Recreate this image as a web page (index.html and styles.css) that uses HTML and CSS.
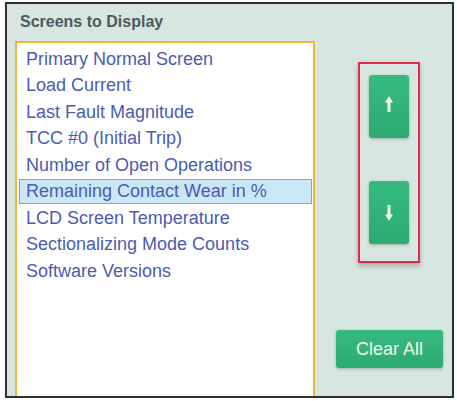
FILE: index.html
```html
<!DOCTYPE html>
<html>
<head>
<meta charset="utf-8">
<link rel="stylesheet" href="styles.css">
</head>
<body>
<div class="frame">
  <div class="title">Screens to Display</div>
  <div class="body">
    <div class="listbox">
      <div class="item">Primary Normal Screen</div>
      <div class="item">Load Current</div>
      <div class="item">Last Fault Magnitude</div>
      <div class="item">TCC #0 (Initial Trip)</div>
      <div class="item">Number of Open Operations</div>
      <div class="item selected">Remaining Contact Wear in %</div>
      <div class="item">LCD Screen Temperature</div>
      <div class="item">Sectionalizing Mode Counts</div>
      <div class="item">Software Versions</div>
    </div>
    <div class="side">
      <div class="movebox">
        <button class="btn move">
          <svg class="arrow up" width="8" height="16" viewBox="0 0 8 16"><path d="M4 0 L8 6.5 H5.5 V16 H2.5 V6.5 H0 Z" fill="#f4f8ee"/></svg>
        </button>
        <button class="btn move">
          <svg class="arrow down" width="8" height="16" viewBox="0 0 8 16"><path d="M4 16 L8 9.5 H5.5 V0 H2.5 V9.5 H0 Z" fill="#f4f8ee"/></svg>
        </button>
      </div>
      <button class="btn clear">Clear All</button>
    </div>
  </div>
</div>
</body>
</html>
```

FILE: styles.css
```css
html, body {
  margin: 0;
  padding: 0;
  background: #ffffff;
}
body {
  font-family: "Liberation Sans", Arial, sans-serif;
  padding-top: 2px;
}
.frame {
  box-sizing: border-box;
  margin: 0 0 0 5px;
  width: 449px;
  height: 396px;
  border: 2px solid #2e3033;
  background: #d8e6e1;
  padding-left: 8px;
  display: flex;
  flex-direction: column;
  overflow: hidden;
}
.title {
  box-sizing: border-box;
  height: 37px;
  flex: none;
  padding: 10px 0 0 5px;
  font-size: 16px;
  line-height: 16px;
  font-weight: bold;
  color: #4b5961;
}
.body {
  display: flex;
  flex: 1;
}
.listbox {
  box-sizing: border-box;
  width: 300px;
  height: 358px;
  border: 2px solid #f0b63c;
  background: #ffffff;
  padding: 3.5px 1px 0 2px;
  display: flex;
  flex-direction: column;
  gap: 1.5px;
}
.item {
  box-sizing: border-box;
  height: 25px;
  border: 1px solid transparent;
  padding-left: 6px;
  font-size: 18px;
  line-height: 23px;
  color: #4a5cb0;
  white-space: nowrap;
}
.item.selected {
  background: #cbe7f6;
  border-color: #5fb2e3;
}
.side {
  display: flex;
  flex-direction: column;
  align-items: flex-start;
}
.movebox {
  box-sizing: border-box;
  margin: 21px 0 0 43px;
  width: 62px;
  height: 201px;
  border: 2.5px solid #e2294c;
  box-shadow: 0 3px 5px rgba(60, 70, 70, 0.35);
  padding: 10.5px 0 0 8.5px;
  display: flex;
  flex-direction: column;
  gap: 43px;
}
.btn {
  border: none;
  border-radius: 3px;
  background: linear-gradient(#36ba80, #2cab72);
  box-shadow: 0 1px 3px rgba(40, 60, 50, 0.35);
  color: #f1f6e6;
  font-family: "Liberation Sans", Arial, sans-serif;
  padding: 0;
  display: flex;
  align-items: center;
  justify-content: center;
}
.move {
  width: 40px;
  height: 63px;
}
.arrow.up {
  margin-bottom: 4px;
}
.arrow.down {
  margin-top: 2px;
}
.clear {
  margin: 67px 0 0 21px;
  width: 107px;
  height: 38px;
  font-size: 18px;
}
```
